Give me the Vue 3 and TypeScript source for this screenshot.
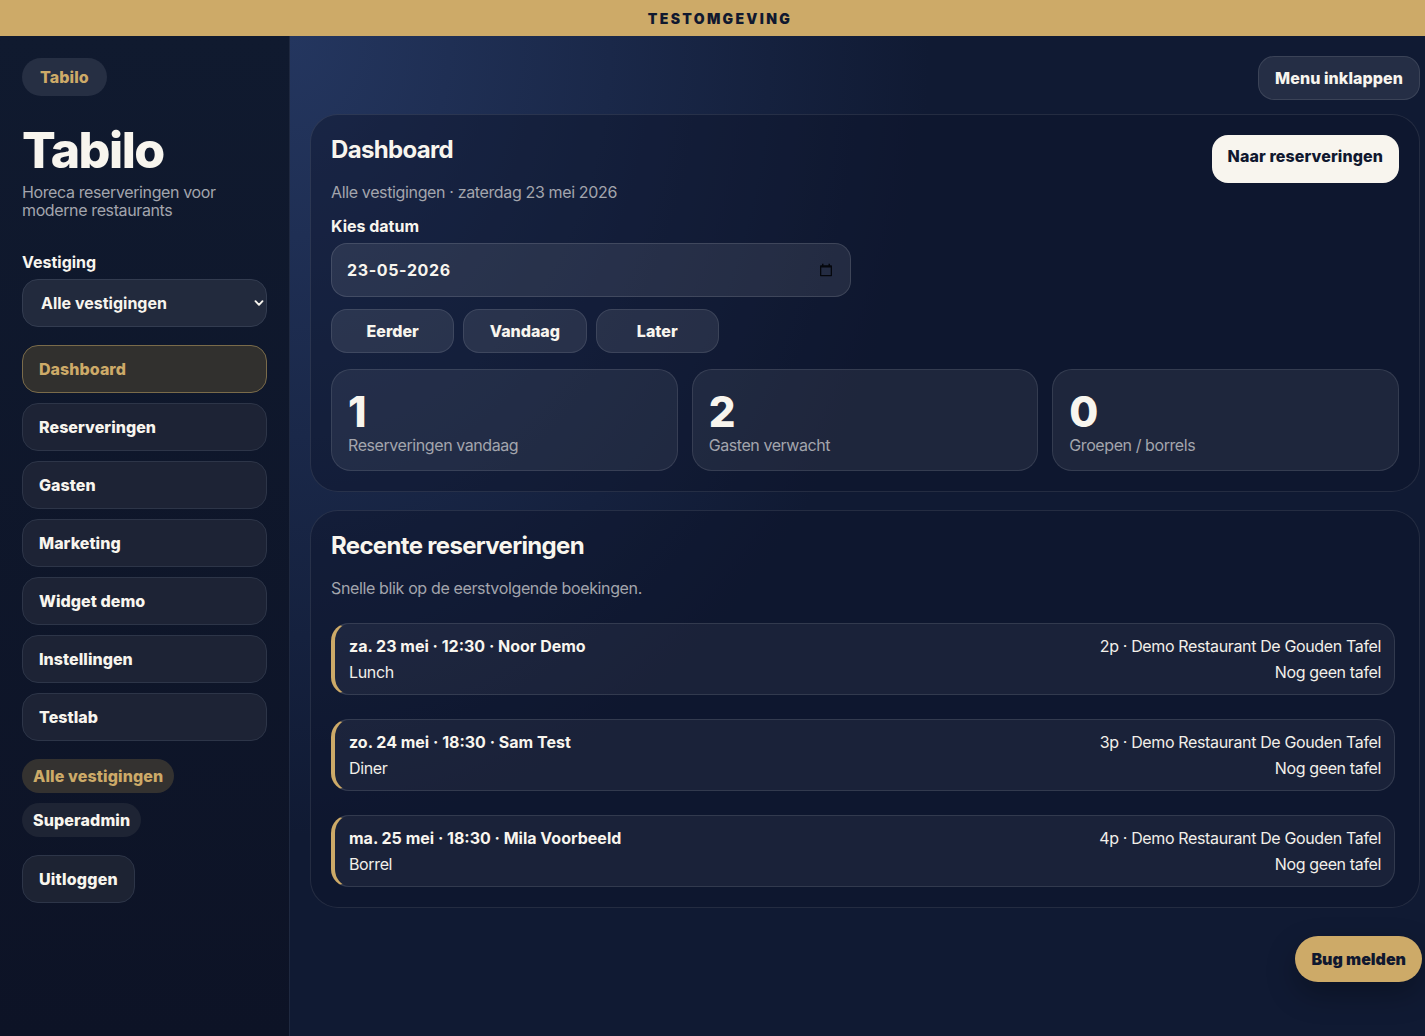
<template>
  <div class="page">
    <div class="env-banner">TESTOMGEVING</div>

    <div class="shell">
      <!-- zijbalk -->
      <aside class="sidebar">
        <span class="brand-pill">Tabilo</span>
        <h1>Tabilo</h1>
        <p class="tagline">Horeca reserveringen voor moderne restaurants</p>

        <label class="side-label" for="location">Vestiging</label>
        <div class="select-wrap">
          <select id="location">
            <option>Alle vestigingen</option>
          </select>
          <svg class="chevron" viewBox="0 0 10 10" width="10" height="10" aria-hidden="true">
            <path d="M1.5 3.2 5 6.8l3.5-3.6" fill="none" stroke="currentColor" stroke-width="1.9" stroke-linecap="round" stroke-linejoin="round" />
          </svg>
        </div>

        <nav class="nav">
          <a v-for="item in navItems" :key="item" :class="{ active: item === 'Dashboard' }">{{ item }}</a>
        </nav>

        <div class="pills">
          <span class="pill gold">Alle vestigingen</span>
          <span class="pill">Superadmin</span>
        </div>

        <button class="logout">Uitloggen</button>
      </aside>

      <!-- hoofdinhoud -->
      <main class="main">
        <div class="topbar">
          <button class="ghost collapse">Menu inklappen</button>
        </div>

        <section class="panel">
          <div class="panel-head">
            <h2>Dashboard</h2>
            <button class="primary">Naar reserveringen</button>
          </div>
          <p class="muted sub">Alle vestigingen · zaterdag 23 mei 2026</p>

          <div class="field-label">Kies datum</div>
          <div class="date-field">
            <span>23-05-2026</span>
            <svg viewBox="0 0 14 14" width="14" height="14" aria-hidden="true">
              <path d="M3 .8h1.5v1.4h5V.8H11v1.4h1.2c.5 0 .8.3.8.8v9.4c0 .5-.3.8-.8.8H1.8c-.5 0-.8-.3-.8-.8V3c0-.5.3-.8.8-.8H3zM2.3 4.6v7.3h9.4V4.6z" fill="#05070d" />
            </svg>
          </div>

          <div class="day-buttons">
            <button v-for="label in dayButtons" :key="label" class="ghost">{{ label }}</button>
          </div>

          <div class="stats">
            <div v-for="stat in stats" :key="stat.label" class="stat">
              <strong>{{ stat.value }}</strong>
              <span>{{ stat.label }}</span>
            </div>
          </div>
        </section>

        <section class="panel recent">
          <h2>Recente reserveringen</h2>
          <p class="muted recent-sub">Snelle blik op de eerstvolgende boekingen.</p>

          <ul class="bookings">
            <li v-for="b in bookings" :key="b.title" class="booking">
              <div>
                <div class="booking-title">{{ b.title }}</div>
                <div class="booking-line">{{ b.type }}</div>
              </div>
              <div class="booking-right">
                <div class="booking-line">{{ b.meta }}</div>
                <div class="booking-line">Nog geen tafel</div>
              </div>
            </li>
          </ul>
        </section>
      </main>
    </div>

    <button class="bug-button">Bug melden</button>
  </div>
</template>

<script setup lang="ts">
const navItems: string[] = ['Dashboard', 'Reserveringen', 'Gasten', 'Marketing', 'Widget demo', 'Instellingen', 'Testlab']
const dayButtons: string[] = ['Eerder', 'Vandaag', 'Later']

const stats = [
  { value: 1, label: 'Reserveringen vandaag' },
  { value: 2, label: 'Gasten verwacht' },
  { value: 0, label: 'Groepen / borrels' },
]

const bookings = [
  { title: 'za. 23 mei · 12:30 · Noor Demo', type: 'Lunch', meta: '2p · Demo Restaurant De Gouden Tafel' },
  { title: 'zo. 24 mei · 18:30 · Sam Test', type: 'Diner', meta: '3p · Demo Restaurant De Gouden Tafel' },
  { title: 'ma. 25 mei · 18:30 · Mila Voorbeeld', type: 'Borrel', meta: '4p · Demo Restaurant De Gouden Tafel' },
]
</script>

<style>
html, body { margin: 0; background: #101a33; overflow: hidden; }
</style>

<style scoped>
* { box-sizing: border-box; }

/* de pagina is iets breder dan het venster en wordt rechts afgesneden */
.page {
  position: relative;
  width: 1440px;
  height: 1036px;
  overflow: hidden;
  font-family: Inter, "Liberation Sans", sans-serif;
  font-size: 16px;
  color: #f8f5ee;
}

.env-banner {
  height: 36px;
  display: flex;
  align-items: center;
  justify-content: center;
  background: #cdaa68;
  color: #10182f;
  font-size: 14px;
  font-weight: 900;
  letter-spacing: 0.165em;
}

.shell { display: flex; height: 1000px; }

.sidebar {
  width: 290px;
  flex: none;
  padding: 22px 22px 0;
  border-right: 1px solid #1f2940;
  background: linear-gradient(180deg, #101a2f 0%, #0d1326 100%);
}

.brand-pill {
  display: inline-flex;
  align-items: center;
  height: 38px;
  padding: 0 18px;
  border-radius: 19px;
  background: #262f43;
  color: #cdaa68;
  font-weight: 800;
  letter-spacing: 0.1px;
}

h1 {
  margin: 24px 0 0;
  font-size: 50px;
  line-height: 60px;
  font-weight: 800;
  letter-spacing: -0.03em;
}

.tagline {
  margin: 3px 0 0;
  line-height: 18px;
  color: #a3a5ad;
  letter-spacing: -0.38px;
}

.side-label, .field-label {
  display: block;
  font-weight: 700;
  line-height: 20px;
}
.side-label { margin: 33px 0 7px; }

.select-wrap { position: relative; }
select {
  width: 100%;
  height: 48px;
  padding: 0 18px;
  appearance: none;
  border: 1px solid #333c50;
  border-radius: 16px;
  background: #222a3d;
  color: #f8f5ee;
  font: 700 16px Inter, "Liberation Sans", sans-serif;
}
.chevron { position: absolute; right: 3px; top: 19px; color: #f8f5ee; }

.nav { display: flex; flex-direction: column; gap: 10px; margin-top: 18px; }
.nav a {
  height: 48px;
  display: flex;
  align-items: center;
  padding: 0 16px;
  border: 1px solid #2d3548;
  border-radius: 16px;
  background: #1d2335;
  font-weight: 800;
  letter-spacing: 0.05px;
}
.nav a.active {
  border-color: #7a6b4a;
  background: #31302e;
  color: #cdaa68;
}

.pills { display: flex; flex-direction: column; align-items: flex-start; gap: 10px; margin-top: 18px; }
.pill {
  height: 34px;
  display: inline-flex;
  align-items: center;
  padding: 0 11px;
  border-radius: 17px;
  background: #1e2434;
  font-weight: 800;
  letter-spacing: 0.12px;
}
.pill.gold { background: #343230; color: #cdaa68; }

button { font-family: inherit; cursor: pointer; }

.logout {
  display: block;
  height: 48px;
  margin-top: 18px;
  padding: 0 16px;
  border: 1px solid #2d3548;
  border-radius: 16px;
  background: #1d2333;
  color: #f8f5ee;
  font-size: 16px;
  font-weight: 800;
  letter-spacing: 0.2px;
}

/* blauwe gloed linksboven schijnt door de halfdoorzichtige panelen heen */
.main {
  flex: 1;
  min-width: 0;
  padding: 20px 20px 0;
  background:
    radial-gradient(ellipse 640px 800px at 0 0, #24365f 0, rgba(36, 54, 95, 0) 100%),
    #101a33;
}

.topbar { display: flex; justify-content: flex-end; }

.ghost {
  height: 44px;
  border: 1px solid rgba(255, 255, 255, 0.1);
  border-radius: 16px;
  background: rgba(255, 255, 255, 0.09);
  color: #f8f5ee;
  font-size: 16px;
  font-weight: 800;
}
.collapse { padding: 0 16px; letter-spacing: 0.08px; }

.panel {
  margin-top: 14px;
  padding: 20px;
  border: 1px solid rgba(255, 255, 255, 0.09);
  border-radius: 28px;
  background: rgba(14, 21, 42, 0.45);
}

.panel-head { display: flex; justify-content: space-between; align-items: flex-start; }

h2 {
  margin: 0;
  font-size: 24px;
  line-height: 30px;
  font-weight: 700;
  letter-spacing: -0.028em;
}

.primary {
  height: 48px;
  padding: 0 16px 6px;
  border: 0;
  border-radius: 16px;
  background: #f8f5ee;
  color: #10182f;
  font-size: 16px;
  font-weight: 800;
  letter-spacing: 0.1px;
}

.muted { color: #a3a5ad; line-height: 20px; letter-spacing: -0.36px; }
.sub { margin: -1px 0 0; }

.field-label { margin-top: 14px; }

.date-field {
  width: 520px;
  height: 54px;
  margin-top: 7px;
  display: flex;
  align-items: center;
  justify-content: space-between;
  padding: 0 17px 0 15px;
  border: 1px solid rgba(255, 255, 255, 0.12);
  border-radius: 16px;
  background: rgba(255, 255, 255, 0.085);
  font-weight: 700;
  letter-spacing: 0.04em;
}

.day-buttons { display: flex; gap: 9px; margin-top: 12px; }
.day-buttons .ghost { width: 123.3px; }

.stats {
  display: grid;
  grid-template-columns: repeat(3, 1fr);
  gap: 14px;
  margin-top: 16px;
}
.stat {
  height: 102px;
  padding: 19px 16px 0;
  border: 1px solid rgba(255, 255, 255, 0.1);
  border-radius: 20px;
  background: rgba(255, 255, 255, 0.065);
}
.stat strong {
  display: block;
  font-size: 42px;
  line-height: 46px;
  font-weight: 800;
}
.stat span { display: block; color: #a3a5ad; line-height: 20px; letter-spacing: -0.42px; }

.recent { margin-top: 18px; padding-top: 20px; padding-bottom: 20px; }
.recent-sub { margin: 17px 0 0; }

.bookings {
  list-style: none;
  margin: 25px 4px 0 0;
  padding: 0;
  display: flex;
  flex-direction: column;
  gap: 24px;
}
.booking {
  height: 72px;
  display: flex;
  justify-content: space-between;
  align-items: center;
  padding: 0 13px 0 14px;
  border: 1px solid rgba(255, 255, 255, 0.11);
  border-left: 4px solid #cdaa68;
  border-radius: 18px;
  background: rgba(255, 255, 255, 0.05);
}
.booking-right { text-align: right; }
.booking-title { font-weight: 700; line-height: 26px; }
.booking-line { line-height: 26px; color: #f2efe9; letter-spacing: -0.36px; }

.bug-button {
  position: absolute;
  right: 18px;
  top: 936px;
  height: 46px;
  padding: 0 16px;
  border: 0;
  border-radius: 23px;
  background: #cdaa68;
  color: #10182f;
  font-size: 16px;
  font-weight: 900;
  box-shadow: 0 12px 30px rgba(0, 0, 0, 0.28);
}
</style>
